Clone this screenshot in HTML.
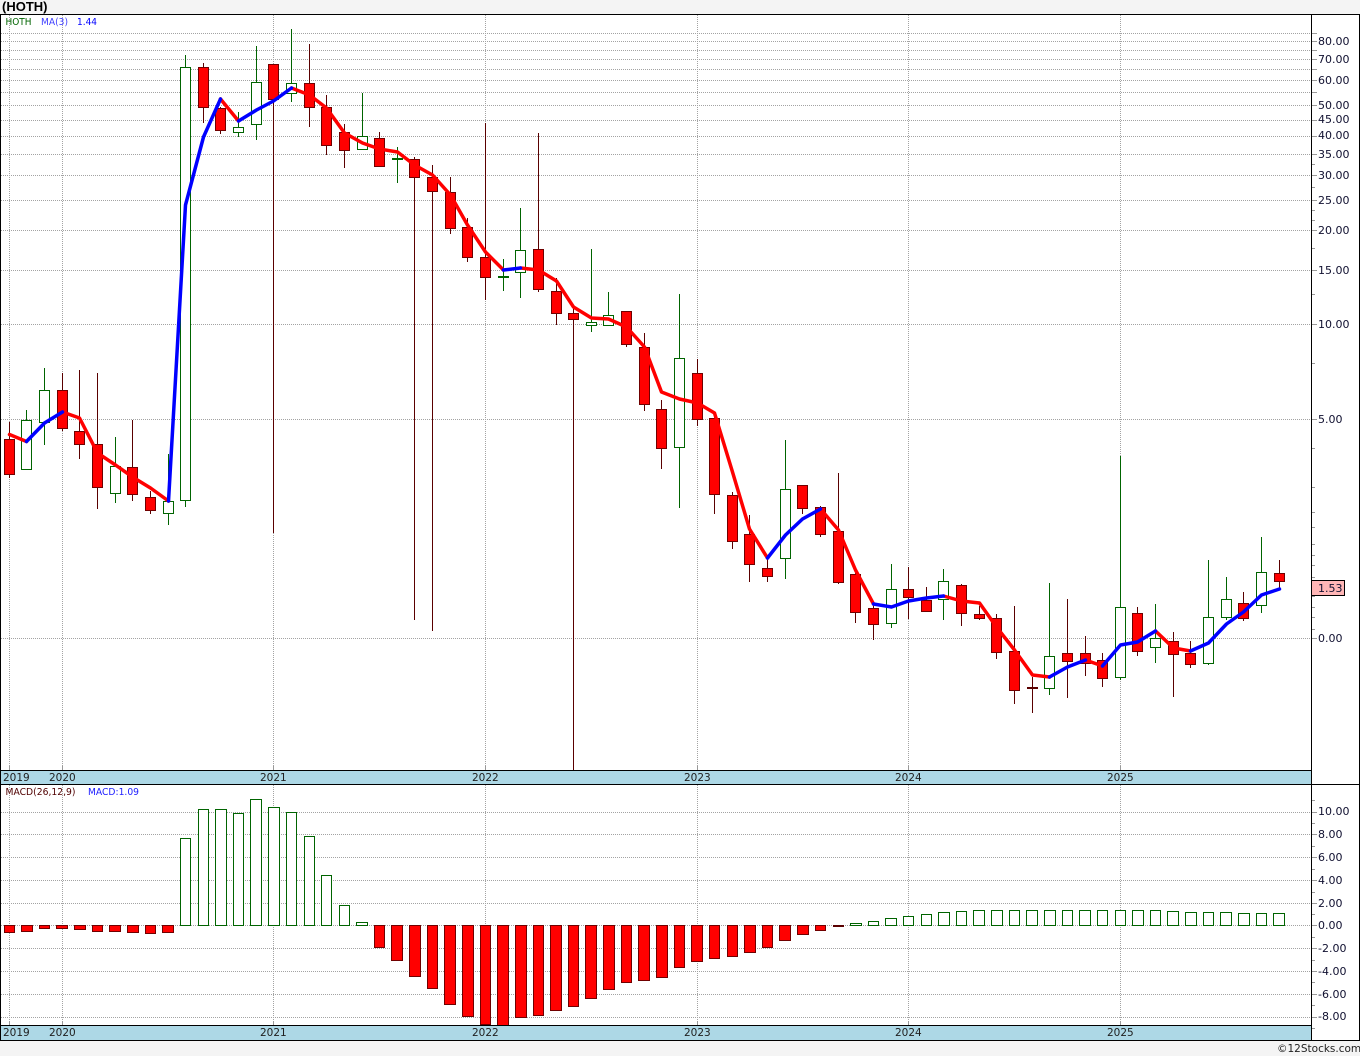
<!DOCTYPE html>
<html><head><meta charset="utf-8"><title>HOTH</title>
<style>
html,body{margin:0;padding:0;background:#f4f4f4;width:1360px;height:1056px;overflow:hidden}
svg{display:block}
text{font-family:"DejaVu Sans","Liberation Sans",sans-serif;font-size:11px;fill:#101030}
.y{font-size:10.5px;fill:#202020}
.s{font-size:9.5px}
</style></head><body>
<svg width="1360" height="1056" viewBox="0 0 1360 1056" xmlns="http://www.w3.org/2000/svg">
<rect x="0" y="14" width="1360" height="1026" fill="#fff"/>
<text x="2" y="11" style="font-family:'Liberation Sans',sans-serif;font-size:13px;font-weight:bold;fill:#000">(HOTH)</text>

<g fill="none" stroke="#a3a3a3" stroke-width="1" stroke-dasharray="1 1" shape-rendering="crispEdges">
<path d="M1 33.5H1311M1 41.5H1311M1 50.5H1311M1 59.5H1311M1 69.5H1311M1 80.5H1311M1 92.5H1311M1 105.5H1311M1 120.5H1311M1 136.5H1311M1 154.5H1311M1 175.5H1311M1 200.5H1311M1 230.5H1311M1 270.5H1311M1 324.5H1311M1 419.5H1311M1 638.5H1311"/>
<path d="M1 812.5H1311M1 834.5H1311M1 857.5H1311M1 880.5H1311M1 903.5H1311M1 925.5H1311M1 948.5H1311M1 971.5H1311M1 994.5H1311M1 1017.5H1311"/>
<path d="M9.5 15V770M62.5 15V770M273.5 15V770M485.5 15V770M697.5 15V770M908.5 15V770M1120.5 15V770"/>
<path d="M9.5 785V1025M62.5 785V1025M273.5 785V1025M485.5 785V1025M697.5 785V1025M908.5 785V1025M1120.5 785V1025"/>
</g>
<g fill="none" stroke="#999" stroke-width="1" shape-rendering="crispEdges">
<path d="M9.5 766V770M62.5 766V770M273.5 766V770M485.5 766V770M697.5 766V770M908.5 766V770M1120.5 766V770M9.5 1021V1025M62.5 1021V1025M273.5 1021V1025M485.5 1021V1025M697.5 1021V1025M908.5 1021V1025M1120.5 1021V1025"/>
<path d="M1311 33.5h6M1311 41.5h6M1311 50.5h6M1311 59.5h6M1311 69.5h6M1311 80.5h6M1311 92.5h6M1311 105.5h6M1311 120.5h6M1311 136.5h6M1311 154.5h6M1311 175.5h6M1311 200.5h6M1311 230.5h6M1311 270.5h6M1311 324.5h6M1311 419.5h6M1311 638.5h6"/>
<path d="M1311 164.5h4M1311 187.5h4M1311 210.5h4M1311 220.5h4M1311 248.5h4M1311 294.5h4M1311 363.5h4M1311 448.5h4M1311 487.5h4M1311 512.5h4M1311 527.5h4M1311 544.5h4M1311 555.5h4M1311 565.5h4M1311 577.5h4M1311 596.5h4M1311 607.5h4M1311 617.5h4M1311 629.5h4"/>
<path d="M1311 812.5h6M1311 834.5h6M1311 857.5h6M1311 880.5h6M1311 903.5h6M1311 925.5h6M1311 948.5h6M1311 971.5h6M1311 994.5h6M1311 1017.5h6"/>
<path d="M1311 800.5h4M1311 823.5h4M1311 846.5h4M1311 869.5h4M1311 892.5h4M1311 914.5h4M1311 937.5h4M1311 960.5h4M1311 982.5h4M1311 1005.5h4M1311 1028.5h4"/>
</g>

<!-- wicks -->
<g fill="none" stroke-width="1" shape-rendering="crispEdges">
<path stroke="#5a0000" d="M9.5 422V478M62.5 373V431M79.5 370V459M97.5 373V509M132.5 420V501M150.5 491V514M203.5 63V123M220.5 107V134M273.5 64V533M309.5 44V127M326.5 95V155M344.5 124V168M379.5 132V166M414.5 157V620M432.5 165V631M450.5 177V234M467.5 218V262M485.5 123V300M538.5 133V292M556.5 278V325M573.5 305V770M626.5 311V347M644.5 333V411M661.5 400V469M697.5 359V426M714.5 414V514M732.5 492V549M749.5 515V582M767.5 559V582M802.5 485V514M820.5 506V537M838.5 473V584M855.5 573V623M873.5 603V640M908.5 567V619M926.5 587V612M961.5 584V626M979.5 606V620M996.5 614V659M1014.5 606V704M1032.5 677V713M1067.5 599V698M1085.5 636V676M1102.5 653V687M1137.5 607V656M1173.5 632V697M1190.5 641V668M1243.5 592V621M1279.5 560V588"/>
<path stroke="#006400" d="M26.5 410V469M44.5 368V445M115.5 437V503M168.5 454V525M185.5 55V507M238.5 112V137M256.5 46V140M291.5 29V102M362.5 93V149M397.5 147V183M503.5 259V291M520.5 208V298M591.5 249V332M608.5 292V325M679.5 294V508M785.5 440V579M891.5 564V628M943.5 569V620M1049.5 583V695M1120.5 456V680M1155.5 604V663M1208.5 560V665M1226.5 577V620M1261.5 537V613"/>
</g>

<!-- bodies -->
<g stroke-width="1" shape-rendering="crispEdges">
<path fill="#f00" stroke="#700000" d="M4.5 439.5h10v35h-10zM57.5 390.5h10v38h-10zM74.5 431.5h10v13h-10zM92.5 444.5h10v43h-10zM127.5 467.5h10v27h-10zM145.5 497.5h10v13h-10zM198.5 67.5h10v40h-10zM215.5 108.5h10v22h-10zM268.5 64.5h10v35h-10zM304.5 83.5h10v24h-10zM321.5 107.5h10v38h-10zM339.5 132.5h10v18h-10zM374.5 138.5h10v28h-10zM409.5 159.5h10v18h-10zM427.5 177.5h10v14h-10zM445.5 192.5h10v36h-10zM462.5 227.5h10v30h-10zM480.5 257.5h10v20h-10zM533.5 249.5h10v40h-10zM551.5 291.5h10v22h-10zM568.5 313.5h10v6h-10zM621.5 311.5h10v33h-10zM639.5 347.5h10v57h-10zM656.5 409.5h10v39h-10zM692.5 373.5h10v46h-10zM709.5 418.5h10v76h-10zM727.5 495.5h10v46h-10zM744.5 534.5h10v30h-10zM762.5 568.5h10v8h-10zM797.5 485.5h10v23h-10zM815.5 507.5h10v27h-10zM833.5 531.5h10v51h-10zM850.5 574.5h10v38h-10zM868.5 608.5h10v16h-10zM903.5 589.5h10v8h-10zM921.5 600.5h10v11h-10zM956.5 585.5h10v28h-10zM974.5 614.5h10v4h-10zM991.5 618.5h10v34h-10zM1009.5 651.5h10v39h-10zM1062.5 653.5h10v8h-10zM1080.5 653.5h10v10h-10zM1097.5 660.5h10v18h-10zM1132.5 613.5h10v38h-10zM1168.5 641.5h10v13h-10zM1185.5 653.5h10v11h-10zM1238.5 603.5h10v15h-10zM1274.5 573.5h10v8h-10z"/>
<path fill="#5a0000" stroke="#5a0000" d="M1027.5 687.5h10v1h-10z"/>
<path fill="#fff" stroke="#006400" d="M21.5 420.5h10v49h-10zM39.5 390.5h10v32h-10zM110.5 466.5h10v27h-10zM163.5 501.5h10v12h-10zM180.5 67.5h10v433h-10zM233.5 127.5h10v5h-10zM251.5 82.5h10v42h-10zM286.5 83.5h10v10h-10zM357.5 136.5h10v13h-10zM515.5 250.5h10v22h-10zM586.5 322.5h10v3h-10zM603.5 315.5h10v10h-10zM674.5 358.5h10v89h-10zM780.5 489.5h10v69h-10zM886.5 589.5h10v34h-10zM938.5 581.5h10v18h-10zM1044.5 656.5h10v32h-10zM1115.5 607.5h10v70h-10zM1150.5 638.5h10v9h-10zM1203.5 617.5h10v46h-10zM1221.5 599.5h10v18h-10zM1256.5 572.5h10v33h-10z"/>
<path fill="#006400" stroke="#006400" d="M392.5 158.5h10v1h-10zM498.5 276.5h10v1h-10z"/>
</g>

<!-- moving average -->
<g fill="none" stroke-width="3.5" stroke-linejoin="round" stroke-linecap="round">
<path stroke="#f00" d="M9.5 434.5L26.5 441.5M62.5 412L79.5 418L97.5 453L115.5 465L132.5 477L150.5 488L168.5 501M220.5 99L238.5 121M291.5 88L309.5 95L326.5 108L344.5 133L362.5 143L379.5 149L397.5 152L414.5 165L432.5 175L450.5 195L467.5 225L485.5 252L503.5 270M520.5 268L538.5 270L556.5 281L573.5 307L591.5 318L608.5 319L626.5 327L644.5 347L661.5 392L679.5 399L697.5 403L714.5 413L732.5 472L749.5 529L767.5 558M820.5 509L838.5 530L855.5 570L873.5 604M943.5 596L961.5 601L979.5 603L996.5 627L1014.5 650L1032.5 675L1049.5 677M1085.5 660L1102.5 666M1155.5 631L1173.5 648L1190.5 651"/>
<path stroke="#00f" d="M26.5 441.5L44.5 423L62.5 412M168.5 501L185.5 205L203.5 137L220.5 99M238.5 121L256.5 110L273.5 101L291.5 88M503.5 270L520.5 268M767.5 558L785.5 535L802.5 519L820.5 509M873.5 604L891.5 607L908.5 601L926.5 598L943.5 596M1049.5 677L1067.5 667L1085.5 660M1102.5 666L1120.5 645L1137.5 642L1155.5 631M1190.5 651L1208.5 643L1226.5 624L1243.5 612L1261.5 595L1279.5 589"/>
</g>

<!-- MACD histogram -->
<g stroke-width="1" shape-rendering="crispEdges">
<path fill="#f00" stroke="#700000" d="M4.5 925.5h10v7h-10zM21.5 925.5h11v6h-11zM39.5 925.5h10v3h-10zM56.5 925.5h11v3h-11zM74.5 925.5h11v4h-11zM92.5 925.5h10v6h-10zM109.5 925.5h11v6h-11zM127.5 925.5h11v7h-11zM145.5 925.5h10v8h-10zM162.5 925.5h11v7h-11zM374.5 925.5h10v22h-10zM391.5 925.5h11v35h-11zM409.5 925.5h11v51h-11zM427.5 925.5h10v63h-10zM444.5 925.5h11v79h-11zM462.5 925.5h11v91h-11zM480.5 925.5h10v99h-10zM497.5 925.5h11v100h-11zM515.5 925.5h11v92h-11zM533.5 925.5h10v90h-10zM550.5 925.5h11v85h-11zM568.5 925.5h10v81h-10zM585.5 925.5h11v73h-11zM603.5 925.5h11v64h-11zM621.5 925.5h10v57h-10zM638.5 925.5h11v55h-11zM656.5 925.5h11v52h-11zM674.5 925.5h10v42h-10zM691.5 925.5h11v36h-11zM709.5 925.5h10v33h-10zM727.5 925.5h10v31h-10zM744.5 925.5h11v27h-11zM762.5 925.5h10v22h-10zM779.5 925.5h11v15h-11zM797.5 925.5h11v9h-11zM815.5 925.5h10v5h-10z"/>
<path fill="#5a0000" stroke="#5a0000" d="M833.5 925.5h10v1h-10z"/>
<path fill="#fff" stroke="#006400" d="M180.5 838.5h10v87h-10zM198.5 809.5h10v116h-10zM215.5 809.5h11v116h-11zM233.5 813.5h10v112h-10zM250.5 799.5h11v126h-11zM268.5 807.5h11v118h-11zM286.5 812.5h10v113h-10zM304.5 836.5h10v89h-10zM321.5 875.5h10v50h-10zM339.5 905.5h10v20h-10zM356.5 922.5h11v3h-11zM850.5 923.5h11v2h-11zM868.5 921.5h10v4h-10zM885.5 918.5h11v7h-11zM903.5 916.5h10v9h-10zM921.5 914.5h10v11h-10zM938.5 912.5h11v13h-11zM956.5 911.5h10v14h-10zM973.5 910.5h11v15h-11zM991.5 910.5h11v15h-11zM1009.5 910.5h10v15h-10zM1026.5 910.5h11v15h-11zM1044.5 910.5h11v15h-11zM1062.5 910.5h10v15h-10zM1079.5 910.5h11v15h-11zM1097.5 910.5h10v15h-10zM1115.5 910.5h10v15h-10zM1132.5 910.5h11v15h-11zM1150.5 910.5h10v15h-10zM1167.5 911.5h11v14h-11zM1185.5 912.5h11v13h-11zM1203.5 912.5h10v13h-10zM1220.5 912.5h11v13h-11zM1238.5 913.5h11v12h-11zM1256.5 913.5h10v12h-10zM1273.5 913.5h11v12h-11z"/>
</g>

<!-- date strips -->
<rect x="0" y="770" width="1311" height="14" fill="#add8e6"/>
<rect x="0" y="1025" width="1311" height="15" fill="#add8e6"/>

<!-- frame -->
<g fill="none" stroke="#000" stroke-width="1" shape-rendering="crispEdges">
<path d="M0 14.5H1360M0 770.5H1311M0 784.5H1360M0 1025.5H1311M0 1040.5H1360M0.5 14V1040M1311.5 14V1040M1359.5 14V1040"/>
</g>

<!-- price tag -->
<rect x="1311.5" y="580.5" width="33" height="15" fill="#ffb6b6" stroke="#000" stroke-width="1" shape-rendering="crispEdges"/>
<text x="1318" y="592">1.53</text>

<!-- chart labels -->
<text class="s" x="5.5" y="25" textLength="26" lengthAdjust="spacingAndGlyphs" style="fill:#006400">HOTH</text>
<text class="s" x="41" y="25" textLength="27" lengthAdjust="spacingAndGlyphs" style="fill:#4040ff">MA(3)</text>
<text class="s" x="77" y="25" textLength="20" lengthAdjust="spacingAndGlyphs" style="fill:#0000ff">1.44</text>
<text class="s" x="5.5" y="795" textLength="70" lengthAdjust="spacingAndGlyphs" style="fill:#500000">MACD(26,12,9)</text>
<text class="s" x="88" y="795" textLength="51" lengthAdjust="spacingAndGlyphs" style="fill:#2020ff">MACD:1.09</text>

<!-- price axis -->
<text x="1318" y="45">80.00</text>
<text x="1318" y="63">70.00</text>
<text x="1318" y="84">60.00</text>
<text x="1318" y="109">50.00</text>
<text x="1318" y="123">45.00</text>
<text x="1318" y="139">40.00</text>
<text x="1318" y="158">35.00</text>
<text x="1318" y="179">30.00</text>
<text x="1318" y="204">25.00</text>
<text x="1318" y="234">20.00</text>
<text x="1318" y="274">15.00</text>
<text x="1318" y="328">10.00</text>
<text x="1318" y="423">5.00</text>
<text x="1318" y="642">0.00</text>

<!-- MACD axis -->
<text x="1318" y="815">10.00</text>
<text x="1318" y="838">8.00</text>
<text x="1318" y="861">6.00</text>
<text x="1318" y="884">4.00</text>
<text x="1318" y="907">2.00</text>
<text x="1318" y="929">0.00</text>
<text x="1318" y="952">-2.00</text>
<text x="1318" y="975">-4.00</text>
<text x="1318" y="998">-6.00</text>
<text x="1318" y="1020">-8.00</text>

<!-- years -->
<text class="y" x="3" y="781">2019</text>
<text class="y" x="49" y="781">2020</text>
<text class="y" x="260" y="781">2021</text>
<text class="y" x="472" y="781">2022</text>
<text class="y" x="684" y="781">2023</text>
<text class="y" x="895" y="781">2024</text>
<text class="y" x="1107" y="781">2025</text>
<text class="y" x="3" y="1036">2019</text>
<text class="y" x="49" y="1036">2020</text>
<text class="y" x="260" y="1036">2021</text>
<text class="y" x="472" y="1036">2022</text>
<text class="y" x="684" y="1036">2023</text>
<text class="y" x="895" y="1036">2024</text>
<text class="y" x="1107" y="1036">2025</text>

<text x="1277" y="1052" style="font-size:10.5px;fill:#222">©12Stocks.com</text>
</svg>
</body></html>
